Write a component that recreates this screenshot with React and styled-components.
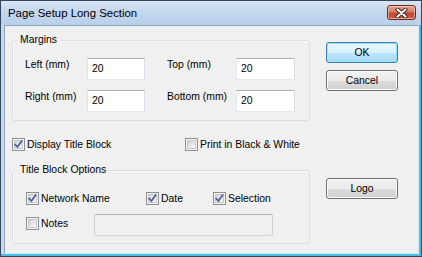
import React from "react";
import styled, { createGlobalStyle, css } from "styled-components";

const GlobalStyle = createGlobalStyle`
  html, body { margin: 0; padding: 0; background: #ffffff; }
  body { font-family: "Liberation Sans", Arial, sans-serif; }
  * { box-sizing: border-box; }
`;

const Window = styled.div`
  width: 422px;
  height: 257px;
  border: 1px solid #34465c;
  background: #c7daef;
  box-shadow: inset -2px -2px 0 #3fc3ea;
  padding: 0 2px 2px 3px;
  display: flex;
  flex-direction: column;
`;

const TitleBar = styled.div`
  height: 24px;
  margin: 0 -2px 0 -3px;
  padding: 0 5px 0 7px;
  display: flex;
  align-items: flex-start;
  justify-content: space-between;
  background: linear-gradient(#d9e6f5 0%, #c3d7ee 45%, #b9d0ea 100%);
`;

const TitleText = styled.div`
  font-family: "Liberation Sans", Arial, sans-serif;
  font-size: 11.4px;
  line-height: 24px;
  color: #000;
  letter-spacing: 0;
`;

const CloseButton = styled.div`
  margin-top: 4px;
  width: 29px;
  height: 15px;
  border: 1px solid #6b2a22;
  border-radius: 3px;
  background: linear-gradient(#e9a493 0%, #d87a66 45%, #c2462f 55%, #cc6148 100%);
  box-shadow: inset 0 0 0 1px rgba(255, 220, 210, 0.55);
  display: flex;
  align-items: center;
  justify-content: center;
`;

const Panel = styled.div`
  flex: 1;
  background: #f0f0f0;
  border-left: 1px solid #8da3bd;
  border-top: 1px solid #8da3bd;
  border-right: 1px solid #dbe6f2;
  border-bottom: 1px solid #dbe6f2;
  padding: 14px 0 0 7px;
  display: flex;
  gap: 16px;
  font-size: 10.4px;
  color: #000;
`;

const MainColumn = styled.div`
  width: 298px;
  display: flex;
  flex-direction: column;
`;

const Group = styled.div`
  position: relative;
  width: 298px;
  border: 1px solid #d5dfe5;
  border-radius: 3px;
  box-shadow: inset 1px 1px 0 #fbfcfd;
  padding: ${(p) => p.$pad};
  margin-top: ${(p) => p.$mt || 0}px;
`;

const Caption = styled.span`
  position: absolute;
  top: -8px;
  left: 5px;
  padding: 0 2px;
  background: #f0f0f0;
  line-height: 14px;
`;

const MarginsGrid = styled.div`
  display: grid;
  grid-template-columns: 62px 80px 69px 59px;
  grid-template-rows: 22px 22px;
  row-gap: 10px;
`;

const FieldLabel = styled.span`
  line-height: 14px;
  white-space: nowrap;
`;

const TextBox = styled.div`
  width: ${(p) => p.$w}px;
  height: 22px;
  padding: 0 4px;
  line-height: 20px;
  border: 1px solid;
  border-color: #abadb3 #dbdfe6 #e3e9ef #e2e3ea;
  background: ${(p) => (p.$disabled ? "#f0f0f0" : "#ffffff")};
  ${(p) =>
    p.$disabled &&
    css`
      border-color: #b4b4b4 #cfcfcf #d6d6d6 #cfcfcf;
      border-radius: 2px;
    `}
`;

const CheckRow = styled.div`
  margin-top: 17px;
  display: grid;
  grid-template-columns: ${(p) => p.$cols};
  height: 13px;
  align-items: center;
`;

const CheckItem = styled.label`
  display: flex;
  align-items: center;
  gap: 2px;
  white-space: nowrap;
  line-height: 13px;
  align-self: ${(p) => (p.$top ? "start" : "center")};
  margin-top: ${(p) => p.$mt || 0}px;
`;

const Box = styled.span`
  width: 13px;
  height: 13px;
  flex: none;
  border: 1px solid #8e8f8f;
  background: #f4f4f4;
  padding: 1px;
  display: flex;
`;

const BoxInner = styled.span`
  flex: 1;
  background: linear-gradient(135deg, #cfd2d7 0%, #e7e8ea 55%, #f7f7f7 100%);
  border: 1px solid #c4c7cc;
  position: relative;
`;

const CheckSvg = styled.svg`
  position: absolute;
  left: -2px;
  top: -2px;
`;

const OptionsRow = styled.div`
  display: grid;
  grid-template-columns: 120px 67px auto;
  height: 13px;
`;

const NotesRow = styled.div`
  margin-top: 9px;
  display: grid;
  grid-template-columns: 68px 179px;
  height: 22px;
`;

const ButtonColumn = styled.div`
  margin-top: 2px;
  width: 72px;
  display: flex;
  flex-direction: column;
  gap: 7px;
`;

const Button = styled.div`
  height: 21px;
  margin-top: ${(p) => p.$mt || 0}px;
  border: 1px solid ${(p) => (p.$primary ? "#3c7fb1" : "#707070")};
  border-radius: 3px;
  display: flex;
  align-items: center;
  justify-content: center;
  font-size: 10.4px;
  line-height: 19px;
  color: #000;
  background: ${(p) =>
    p.$primary
      ? "linear-gradient(#eaf6fd 0%, #d9f0fc 50%, #bee6fd 51%, #a7d9f5 100%)"
      : "linear-gradient(#f2f2f2 0%, #ebebeb 50%, #dddddd 51%, #cfcfcf 100%)"};
  box-shadow: inset 0 0 0 1px ${(p) => (p.$primary ? "#94e2fc" : "#fcfcfc")};
`;

function Check({ checked, label, top, mt }) {
  return (
    <CheckItem $top={top} $mt={mt}>
      <Box>
        <BoxInner>
          {checked && (
            <CheckSvg width="11" height="11" viewBox="0 0 11 11">
              <path
                d="M2.2 5.6 L4.4 8 L8.6 2.2"
                fill="none"
                stroke="#4a5c94"
                strokeWidth="1.7"
                strokeLinecap="square"
              />
            </CheckSvg>
          )}
        </BoxInner>
      </Box>
      <span>{label}</span>
    </CheckItem>
  );
}

export default function App() {
  return (
    <>
      <GlobalStyle />
      <Window>
        <TitleBar>
          <TitleText>Page Setup Long Section</TitleText>
          <CloseButton>
            <svg width="13" height="10" viewBox="0 0 13 10">
              <path d="M2.5 1.5 L10.5 8.5 M10.5 1.5 L2.5 8.5" stroke="#3a1a16" strokeWidth="4" strokeLinecap="round" />
              <path d="M2.5 1.5 L10.5 8.5 M10.5 1.5 L2.5 8.5" stroke="#ffffff" strokeWidth="2.2" strokeLinecap="round" />
            </svg>
          </CloseButton>
        </TitleBar>
        <Panel>
          <MainColumn>
            <Group $pad="17px 0 8px 12px">
              <Caption>Margins</Caption>
              <MarginsGrid>
                <FieldLabel>Left (mm)</FieldLabel>
                <TextBox $w={58}>20</TextBox>
                <FieldLabel>Top (mm)</FieldLabel>
                <TextBox $w={59}>20</TextBox>
                <FieldLabel>Right (mm)</FieldLabel>
                <TextBox $w={58}>20</TextBox>
                <FieldLabel>Bottom (mm)</FieldLabel>
                <TextBox $w={59}>20</TextBox>
              </MarginsGrid>
            </Group>
            <CheckRow $cols="173px auto">
              <Check checked label="Display Title Block" />
              <Check label="Print in Black & White" />
            </CheckRow>
            <Group $pad="21px 0 7px 13px" $mt={19}>
              <Caption>Title Block Options</Caption>
              <OptionsRow>
                <Check checked label="Network Name" />
                <Check checked label="Date" />
                <Check checked label="Selection" />
              </OptionsRow>
              <NotesRow>
                <Check label="Notes" top mt={3} />
                <TextBox $w={179} $disabled />
              </NotesRow>
            </Group>
          </MainColumn>
          <ButtonColumn>
            <Button $primary>OK</Button>
            <Button>Cancel</Button>
            <Button $mt={80}>Logo</Button>
          </ButtonColumn>
        </Panel>
      </Window>
    </>
  );
}
